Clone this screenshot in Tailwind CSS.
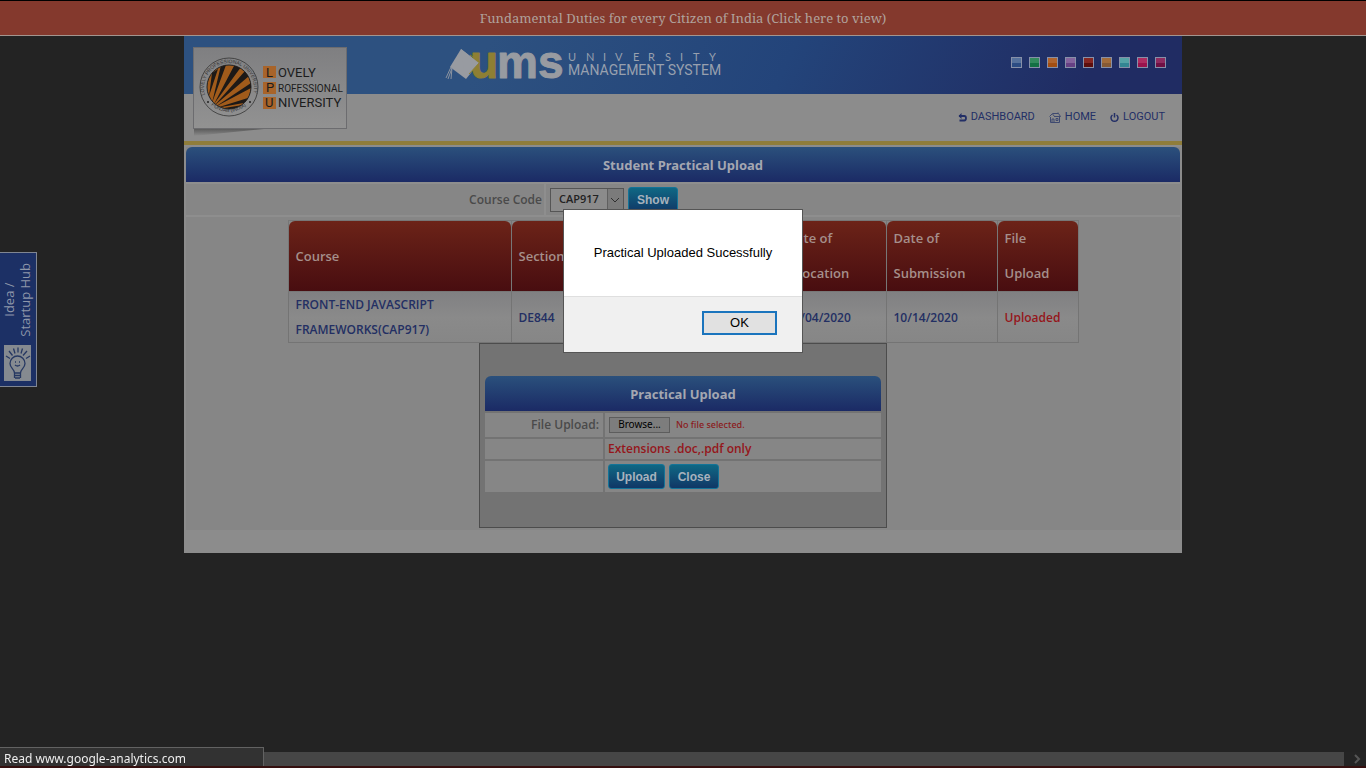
<!DOCTYPE html>
<html lang="en">
<head>
<meta charset="utf-8">
<title>Student Practical Upload</title>
<script src="https://cdn.jsdelivr.net/npm/@tailwindcss/browser@4"></script>
</head>
<body class="flex min-h-screen flex-col overflow-x-hidden bg-[#232323] font-['Open_Sans','Noto_Sans',sans-serif] text-xs">

<a href="#" class="flex h-9 items-center justify-center border-t border-b border-t-black border-b-[#a3958f] bg-[#84392d] pt-0.5 font-['Noto_Serif','Liberation_Serif',serif] text-[13px] text-[#b0a29c]">Fundamental Duties for every Citizen of India (Click here to view)</a>

<div class="mx-auto w-full max-w-[998px] grow-0 bg-[#8c8c8c]">
  <header class="relative h-[105px]">
    <div class="flex h-[58px] items-center justify-between bg-linear-115 from-[#2d5180] from-30% via-[#23447a] via-60% to-[#202c63] to-90% pr-4 pl-[260px]">
      <svg class="h-[58px] w-[280px] shrink-0" viewBox="0 -7 280 58" role="img" aria-label="UMS University Management System">
        <path d="M17 6 35 20 22 36 6 24Z" fill="#989ba1"/>
        <path d="M7 24 2 35M8 25 4 36M8 25 7 36" stroke="#8b93a0" fill="none"/>
        <text x="26" y="35" font-family="Liberation Sans" font-weight="700" font-size="46" fill="#8e7f34" stroke="#8e7f34" stroke-linejoin="round">u</text>
        <path d="M17 6 35 20 25 31 20 26Z" fill="#989ba1"/>
        <path d="M26 12 36 19 25 31" stroke="#8e7f34" fill="none"/>
        <text x="53" y="35" font-family="Liberation Sans" font-weight="700" font-size="46" fill="#989ba1" stroke="#989ba1" stroke-linejoin="round">ms</text>
        <g font-family="Lato" font-size="11" fill="#98a0ae">
          <text x="124" y="18">U</text><text x="142" y="18">N</text><text x="159" y="18">I</text><text x="171" y="18">V</text><text x="189" y="18">E</text><text x="204" y="18">R</text><text x="221" y="18">S</text><text x="236" y="18">I</text><text x="249" y="18">T</text><text x="265" y="18">Y</text>
        </g>
        <text x="124" y="32" font-family="Roboto" font-size="14" fill="#98a0ae">MANAGEMENT SYSTEM</text>
      </svg>
      <div class="mt-[-6px] flex gap-[7px]">
        <button aria-label="Blue theme" class="size-[11px] border border-[#8790a8] bg-linear-to-b from-[#56719c] from-50% to-[#2c4c83] to-50%"></button>
        <button aria-label="Green theme" class="size-[11px] border border-[#8790a8] bg-linear-to-b from-[#328a5d] from-50% to-[#137044] to-50%"></button>
        <button aria-label="Orange theme" class="size-[11px] border border-[#8790a8] bg-linear-to-b from-[#b0642d] from-50% to-[#a34e12] to-50%"></button>
        <button aria-label="Purple theme" class="size-[11px] border border-[#8790a8] bg-linear-to-b from-[#84639d] from-50% to-[#664084] to-50%"></button>
        <button aria-label="Maroon theme" class="size-[11px] border border-[#8790a8] bg-linear-to-b from-[#852622] from-50% to-[#5c0e0d] to-50%"></button>
        <button aria-label="Brown theme" class="size-[11px] border border-[#8790a8] bg-linear-to-b from-[#a26c3b] from-50% to-[#865a35] to-50%"></button>
        <button aria-label="Teal theme" class="size-[11px] border border-[#8790a8] bg-linear-to-b from-[#55a3a6] from-50% to-[#338693] to-50%"></button>
        <button aria-label="Pink theme" class="size-[11px] border border-[#8790a8] bg-linear-to-b from-[#ae2c61] from-50% to-[#99134d] to-50%"></button>
        <button aria-label="Magenta theme" class="size-[11px] border border-[#8790a8] bg-linear-to-b from-[#8e2b60] from-50% to-[#6f1044] to-50%"></button>
      </div>
    </div>
    <nav class="flex h-11 items-center justify-end gap-3.5 pt-0.5 pr-[17px] font-['Roboto','Noto_Sans',sans-serif] text-[11px] text-[#232f66]">
      <a href="#" class="flex items-center gap-1">
        <svg class="size-[9px]" viewBox="0 0 9 9" fill="none" stroke="#232f66" stroke-width="1.8"><path d="M1 3h5.2Q8 3 8 5.200T6.200 7.500H1.500"/><path d="M3.500 0 .5 3l3 3z" fill="#232f66" stroke="none"/></svg>DASHBOARD</a>
      <a href="#" class="flex items-center gap-1">
        <svg class="h-[11px] w-3" viewBox="0 0 12 11" fill="none" stroke="#3f4a70"><path d="M.5 4.500 3.500 1.500h6l2 3H5.500M3.500 2 6 5M1.500 5v5.500h9V5M3 10.500V7h2v3.500M7 6.500h2v2H7zM9 1.500V.5"/></svg>HOME</a>
      <a href="#" class="flex items-center gap-1">
        <svg class="h-[11px] w-[9px]" viewBox="0 0 9 11" fill="none" stroke="#232f66" stroke-width="1.500"><path d="M2.500 3a3.500 3.500 0 1 0 4 0M4.500 1v4.500"/></svg>LOGOUT</a>
    </nav>
    <svg class="absolute top-2.5 left-2 h-[90px] w-[158px]" viewBox="0 0 158 90" role="img" aria-label="Lovely Professional University">
      <defs>
        <linearGradient id="card" x1="0" y1="0" x2="0" y2="1"><stop offset="0" stop-color="#7f7f81"/><stop offset="1" stop-color="#929292"/></linearGradient>
        <linearGradient id="shade" x1="0" y1="0" x2="0" y2="1"><stop offset="0" stop-color="#555"/><stop offset="1" stop-color="#8c8c8c"/></linearGradient>
        <clipPath id="sun"><circle cx="37" cy="41" r="22"/></clipPath>
        <path id="arcTop" d="M13 49a25 25 0 1 1 48 0"/>
        <path id="arcBottom" d="M14 53a27 27 0 0 0 46 0"/>
      </defs>
      <path d="M2 82h80L2 90Z" fill="url(#shade)"/>
      <rect x="1.500" y="1.500" width="153" height="81" fill="url(#card)" stroke="#6c6c6f"/>
      <circle cx="37" cy="41" r="29" fill="none" stroke="#333" stroke-width=".8"/>
      <circle cx="37" cy="41" r="22" fill="#a15b1b" stroke="#222"/>
      <g clip-path="url(#sun)" fill="#1d1917">
        <path d="M17 50 20 27l6-4zM20 57 29 19h5zM22 58 43 18l6 3zM22 60 53 25l4 5zM23 61 59 37v5zM24 62l35-11-2 5zM26 63l25-4-5 4z"/>
      </g>
      <g font-family="Liberation Sans" font-size="5" fill="#333">
        <text><textPath href="#arcTop">LOVELY   PROFESSIONAL   UNIVERSITY</textPath></text>
        <text><textPath href="#arcBottom" startOffset="8">PUNJAB (INDIA)</textPath></text>
      </g>
      <circle cx="16" cy="56" r="1" fill="#222"/><circle cx="58" cy="56" r="1" fill="#222"/>
      <g fill="#a8642a"><rect x="71" y="20" width="13" height="12"/><rect x="71" y="36" width="13" height="12"/><rect x="71" y="51" width="13" height="12"/></g>
      <g font-family="Roboto" fill="#1c1c1c">
        <g font-size="13"><text x="74" y="31">L</text><text x="74" y="46">P</text><text x="73" y="61">U</text></g>
        <text x="86" y="31" font-size="13">OVELY</text>
        <text x="86" y="46" font-size="10">ROFESSIONAL</text>
        <text x="86" y="61" font-size="13">NIVERSITY</text>
      </g>
    </svg>
  </header>

  <main class="border-t-4 border-[#8f7d3b] pt-0.5">
    <div class="mx-0.5 bg-[#868686] pb-0.5">
      <h1 class="flex h-[35px] items-center justify-center rounded-t-md bg-linear-to-b from-[#2b507c] to-[#1b2a65] pt-0.5 font-['Noto_Sans',sans-serif] text-[13px] font-bold text-[#a4a7b1]">Student Practical Upload</h1>
      <form class="grid h-[35px] grid-cols-[360px_1fr] border-y-2 border-[#8e8e8e]">
        <label for="course" class="flex items-center justify-end border-r-2 border-[#8e8e8e] pr-0.5 text-xs font-semibold text-[#4a4a4a]">Course Code</label>
        <div class="flex items-center gap-1 pl-1">
          <div class="relative">
            <select id="course" class="block h-6 w-[74px] appearance-none border border-[#555] bg-[#8b8b8b] px-2 text-[11px] font-semibold text-[#222]"><option>CAP917</option></select>
            <svg class="pointer-events-none absolute top-px right-px h-[22px] w-4 bg-[#7b7b7b]" viewBox="0 0 16 22" fill="none" stroke="#303030"><path d="M.5 0v22" stroke="#606060"/><path d="m4 9 4 4 4-4"/></svg>
          </div>
          <button type="button" class="h-[26px] w-[50px] rounded-[3px] border border-[#147498] bg-linear-to-b from-[#0f6884] to-[#103766] font-['Liberation_Sans',sans-serif] text-xs font-bold text-[#a7b2bd]">Show</button>
        </div>
      </form>

      <table class="mx-auto mt-[3px] w-[790px] table-fixed border-collapse text-left">
        <colgroup><col class="w-[223px]"><col class="w-[268px]"><col class="w-[107px]"><col class="w-[111px]"><col class="w-[81px]"></colgroup>
        <thead class="text-[13px] leading-[35px] text-[#a58f8b]">
          <tr class="h-[71px]">
            <th class="border border-[#777] p-0 font-semibold"><div class="flex h-[70px] items-center rounded-t-md bg-linear-to-b from-[#6c2318] to-[#480d10] px-[7px]">Course</div></th>
            <th class="border border-[#777] p-0 font-semibold"><div class="flex h-[70px] items-center rounded-t-md bg-linear-to-b from-[#6c2318] to-[#480d10] px-[7px]">Section</div></th>
            <th class="border border-[#777] p-0 font-semibold"><div class="flex h-[70px] items-center rounded-t-md bg-linear-to-b from-[#6c2318] to-[#480d10] px-[7px]">Date of<br>Allocation</div></th>
            <th class="border border-[#777] p-0 font-semibold"><div class="flex h-[70px] items-center rounded-t-md bg-linear-to-b from-[#6c2318] to-[#480d10] px-[7px]">Date of<br>Submission</div></th>
            <th class="border border-[#777] p-0 font-semibold"><div class="flex h-[70px] items-center rounded-t-md bg-linear-to-b from-[#6c2318] to-[#480d10] px-[7px]">File<br>Upload</div></th>
          </tr>
        </thead>
        <tbody class="text-xs leading-[25px] font-semibold text-[#232f63]">
          <tr class="h-[51px] bg-linear-to-b from-[#808082] via-[#8a8a8a] to-[#868686]">
            <td class="border border-[#747474] px-[7px] py-0">FRONT-END JAVASCRIPT<br>FRAMEWORKS(CAP917)</td>
            <td class="border border-[#747474] px-[7px] py-0">DE844</td>
            <td class="border border-[#747474] px-[7px] py-0">10/04/2020</td>
            <td class="border border-[#747474] px-[7px] py-0">10/14/2020</td>
            <td class="border border-[#747474] px-[7px] py-0 text-[#95161b]">Uploaded</td>
          </tr>
        </tbody>
      </table>

      <section class="mx-auto h-[185px] w-[408px] border border-[#4c4c4c] bg-[#737373] px-[5px] pt-8">
        <h2 class="flex h-[35px] items-center justify-center rounded-t-md bg-linear-to-b from-[#2b507c] to-[#1b2a65] pt-0.5 font-['Noto_Sans',sans-serif] text-[13px] font-bold text-[#a4a7b1]">Practical Upload</h2>
        <form class="mt-0.5 grid grid-cols-[118px_1fr] gap-0.5 text-xs font-semibold">
          <label for="file" class="flex h-6 items-center justify-end bg-[#868686] pr-1 text-[#4a4a4a]">File Upload:</label>
          <div class="flex items-center gap-1.5 bg-[#868686] pl-1">
            <input id="file" type="file" class="sr-only">
            <label for="file" class="flex h-4 w-[61px] items-center justify-center border border-[#5d5d5d] bg-[#7d7d7d] font-['Noto_Sans',sans-serif] text-[10px] font-normal text-black">Browse...</label>
            <span class="font-['Noto_Sans',sans-serif] text-[9px] font-medium text-[#8b1b20]">No file selected.</span>
          </div>
          <div class="h-5 bg-[#868686]"></div>
          <p class="flex items-center bg-[#868686] pl-[3px] text-[#95161b]">Extensions .doc,.pdf only</p>
          <div class="h-[31px] bg-[#868686]"></div>
          <div class="flex items-center gap-1 bg-[#868686] pl-[3px] font-['Liberation_Sans',sans-serif] font-bold text-[#a7b2bd]">
            <button type="button" class="h-[25px] w-[57px] rounded-[3px] border border-[#147498] bg-linear-to-b from-[#0f6884] to-[#103766]">Upload</button>
            <button type="button" class="h-[25px] w-[50px] rounded-[3px] border border-[#147498] bg-linear-to-b from-[#0f6884] to-[#103766]">Close</button>
          </div>
        </form>
      </section>
    </div>
    <div class="h-[23px]"></div>
  </main>
</div>

<a href="#" class="fixed top-[252px] left-0 flex h-[135px] w-[37px] flex-col items-center justify-between border border-l-0 border-[#808692] bg-[#1c3065] pt-2.5 pr-0.5 pb-[5px] text-[13px] leading-4 text-[#8e97aa]">
  <span class="rotate-180 text-center [writing-mode:vertical-rl]">Idea /<br>Startup Hub</span>
  <svg class="h-9 w-[27px] bg-[#858a90]" viewBox="0 0 27 36" fill="none" stroke="#263862" stroke-width="1.300"><path d="M10.500 28c0-4-4.500-5-4.500-9.500a7.500 7.500 0 0 1 15 0C21 23 16.500 24 16.500 28zM10.500 30.500h6M11 33h5M10.500 28v5M16.500 28v5M2 11l4 2.500M5 6l3.500 4.500M9.500 3.500 11 8.500M14 2.500v5M18.500 3.500 17 8.500M23 6l-4 4.500M26 11l-4 2.500M11 17h1M15 17h1M11 20q2.500 2 5 0"/></svg>
</a>

<div class="fixed right-0 bottom-0 left-0 flex h-4 items-center justify-end border-b-2 border-[#35100f] bg-[#242424]">
  <div class="h-full grow bg-[#464646]"></div>
  <svg class="h-3 w-[22px]" viewBox="0 0 22 12" fill="none" stroke="#555" stroke-width="2"><path d="m11 2 4 4-4 4"/></svg>
</div>
<div class="fixed bottom-0.5 left-0 flex h-[19px] w-[264px] items-center border-t border-r border-[#626262] bg-[#323232] pt-1 pl-1 font-['Noto_Sans',sans-serif] text-xs text-[#eee]">Read www.google-analytics.com</div>

<div role="alertdialog" aria-labelledby="message" class="fixed top-[209px] left-1/2 w-60 -translate-x-1/2 border border-[#555] bg-white font-['Liberation_Sans',sans-serif] text-[13px] text-black">
  <p id="message" class="flex h-[86px] items-center justify-center">Practical Uploaded Sucessfully</p>
  <div class="flex h-14 justify-end border-t border-[#dfdfdf] bg-[#f0f0f0] pt-3.5 pr-[25px]">
    <button type="button" class="flex h-6 w-[75px] items-center justify-center border-2 border-[#1a74bd] bg-[#e1e1e1]">OK</button>
  </div>
</div>
</body>
</html>
